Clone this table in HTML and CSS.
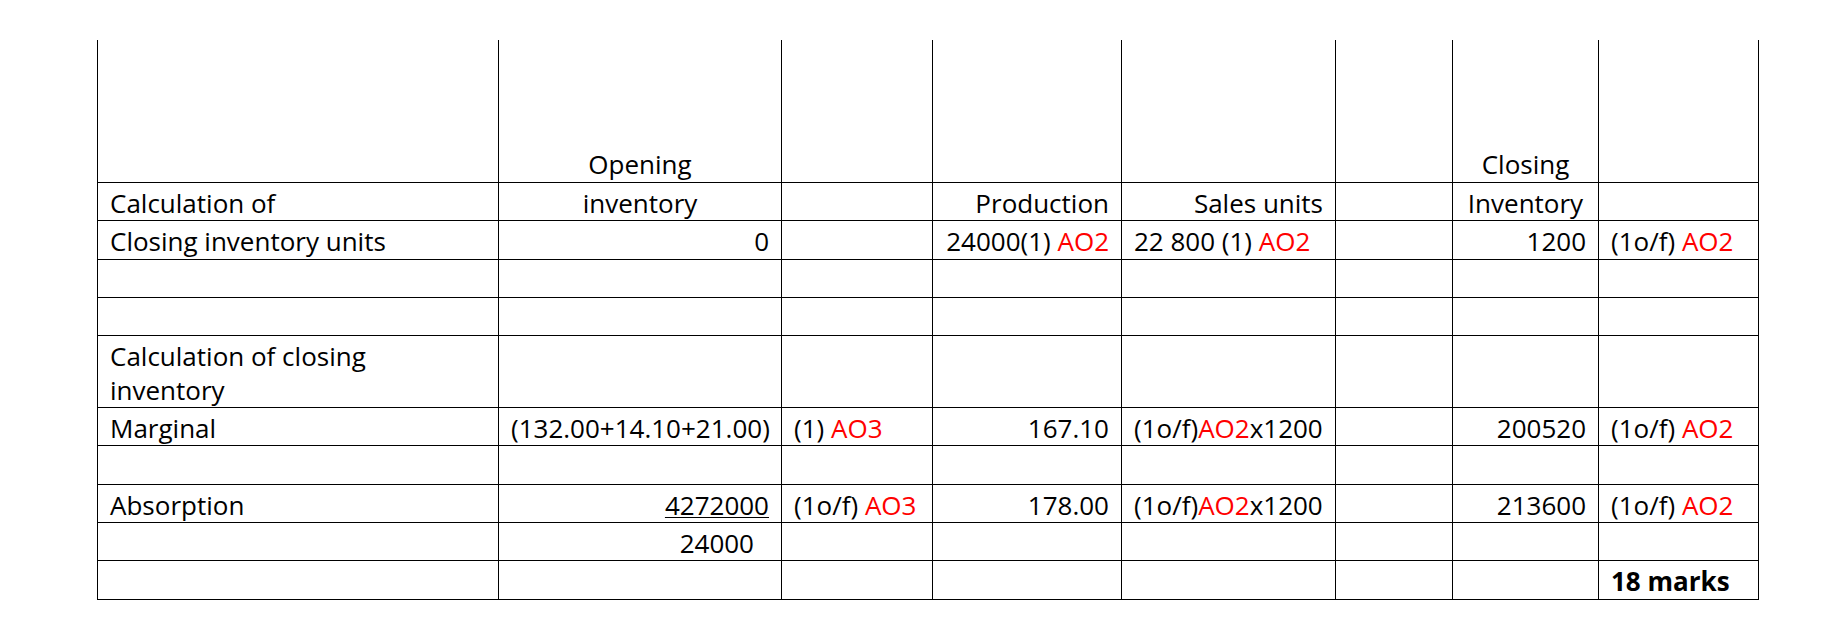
FILE: index.html
```html
<!DOCTYPE html>
<html lang="en">
<head>
<meta charset="utf-8">
<title>Closing inventory calculation</title>
<link rel="stylesheet" href="styles.css">
</head>
<body>
<table class="sheet">
  <colgroup>
    <col class="c1"><col class="c2"><col class="c3"><col class="c4">
    <col class="c5"><col class="c6"><col class="c7"><col class="c8">
  </colgroup>
  <tbody>
    <tr class="head">
      <td></td>
      <td class="ctr">Opening</td>
      <td></td>
      <td></td>
      <td></td>
      <td></td>
      <td class="ctr">Closing</td>
      <td></td>
    </tr>
    <tr>
      <td>Calculation of</td>
      <td class="ctr">inventory</td>
      <td></td>
      <td class="rt">Production</td>
      <td class="rt">Sales units</td>
      <td></td>
      <td class="ctr">Inventory</td>
      <td></td>
    </tr>
    <tr>
      <td>Closing inventory units</td>
      <td class="rt">0</td>
      <td></td>
      <td class="rt">24000(1) <span class="red">AO2</span></td>
      <td>22 800 (1) <span class="red">AO2</span></td>
      <td></td>
      <td class="rt">1200</td>
      <td>(1o/f) <span class="red">AO2</span></td>
    </tr>
    <tr><td></td><td></td><td></td><td></td><td></td><td></td><td></td><td></td></tr>
    <tr><td></td><td></td><td></td><td></td><td></td><td></td><td></td><td></td></tr>
    <tr>
      <td>Calculation of closing<br>inventory</td>
      <td></td><td></td><td></td><td></td><td></td><td></td><td></td>
    </tr>
    <tr>
      <td>Marginal</td>
      <td class="rt">(132.00+14.10+21.00)</td>
      <td>(1) <span class="red">AO3</span></td>
      <td class="rt">167.10</td>
      <td>(1o/f)<span class="red">AO2</span>x1200</td>
      <td></td>
      <td class="rt">200520</td>
      <td>(1o/f) <span class="red">AO2</span></td>
    </tr>
    <tr><td></td><td></td><td></td><td></td><td></td><td></td><td></td><td></td></tr>
    <tr>
      <td>Absorption</td>
      <td class="rt"><span class="under">4272000</span></td>
      <td>(1o/f) <span class="red">AO3</span></td>
      <td class="rt">178.00</td>
      <td>(1o/f)<span class="red">AO2</span>x1200</td>
      <td></td>
      <td class="rt">213600</td>
      <td>(1o/f) <span class="red">AO2</span></td>
    </tr>
    <tr>
      <td></td>
      <td class="rt denom">24000</td>
      <td></td><td></td><td></td><td></td><td></td><td></td>
    </tr>
    <tr>
      <td></td><td></td><td></td><td></td><td></td><td></td><td></td>
      <td class="bold">18 marks</td>
    </tr>
  </tbody>
</table>
</body>
</html>
```
FILE: styles.css
```css
html, body {
  margin: 0;
  padding: 0;
  background: #ffffff;
}

body {
  font-family: "Open Sans", "Noto Sans", "Liberation Sans", sans-serif;
  font-size: 26px;
  color: #000000;
}

.sheet {
  margin: 40px 0 0 97px;
  width: 1661px;
  table-layout: fixed;
  border-collapse: collapse;
}

.c1 { width: 401px; }
.c2 { width: 283px; }
.c3 { width: 151px; }
.c4 { width: 189px; }
.c5 { width: 214px; }
.c6 { width: 117px; }
.c7 { width: 146px; }
.c8 { width: 160px; }

.sheet tr {
  height: 38.3px;
}

.sheet td {
  border: 1px solid #000000;
  padding: 3px 12px 0 12px;
  line-height: 34px;
  vertical-align: top;
  white-space: nowrap;
  overflow: hidden;
}

.sheet tr:first-child td {
  border-top: none;
}

.sheet tr.head {
  height: 142.5px;
}

.head td {
  vertical-align: bottom;
  padding-bottom: 1px;
}

.ctr { text-align: center; }
.rt { text-align: right; }

.sheet td.denom {
  padding-right: 27px;
}

.red { color: #ff0000; }

.under {
  text-decoration: underline;
  text-decoration-thickness: 1px;
  text-underline-offset: 2px;
}

.bold { font-weight: 700; }
```
